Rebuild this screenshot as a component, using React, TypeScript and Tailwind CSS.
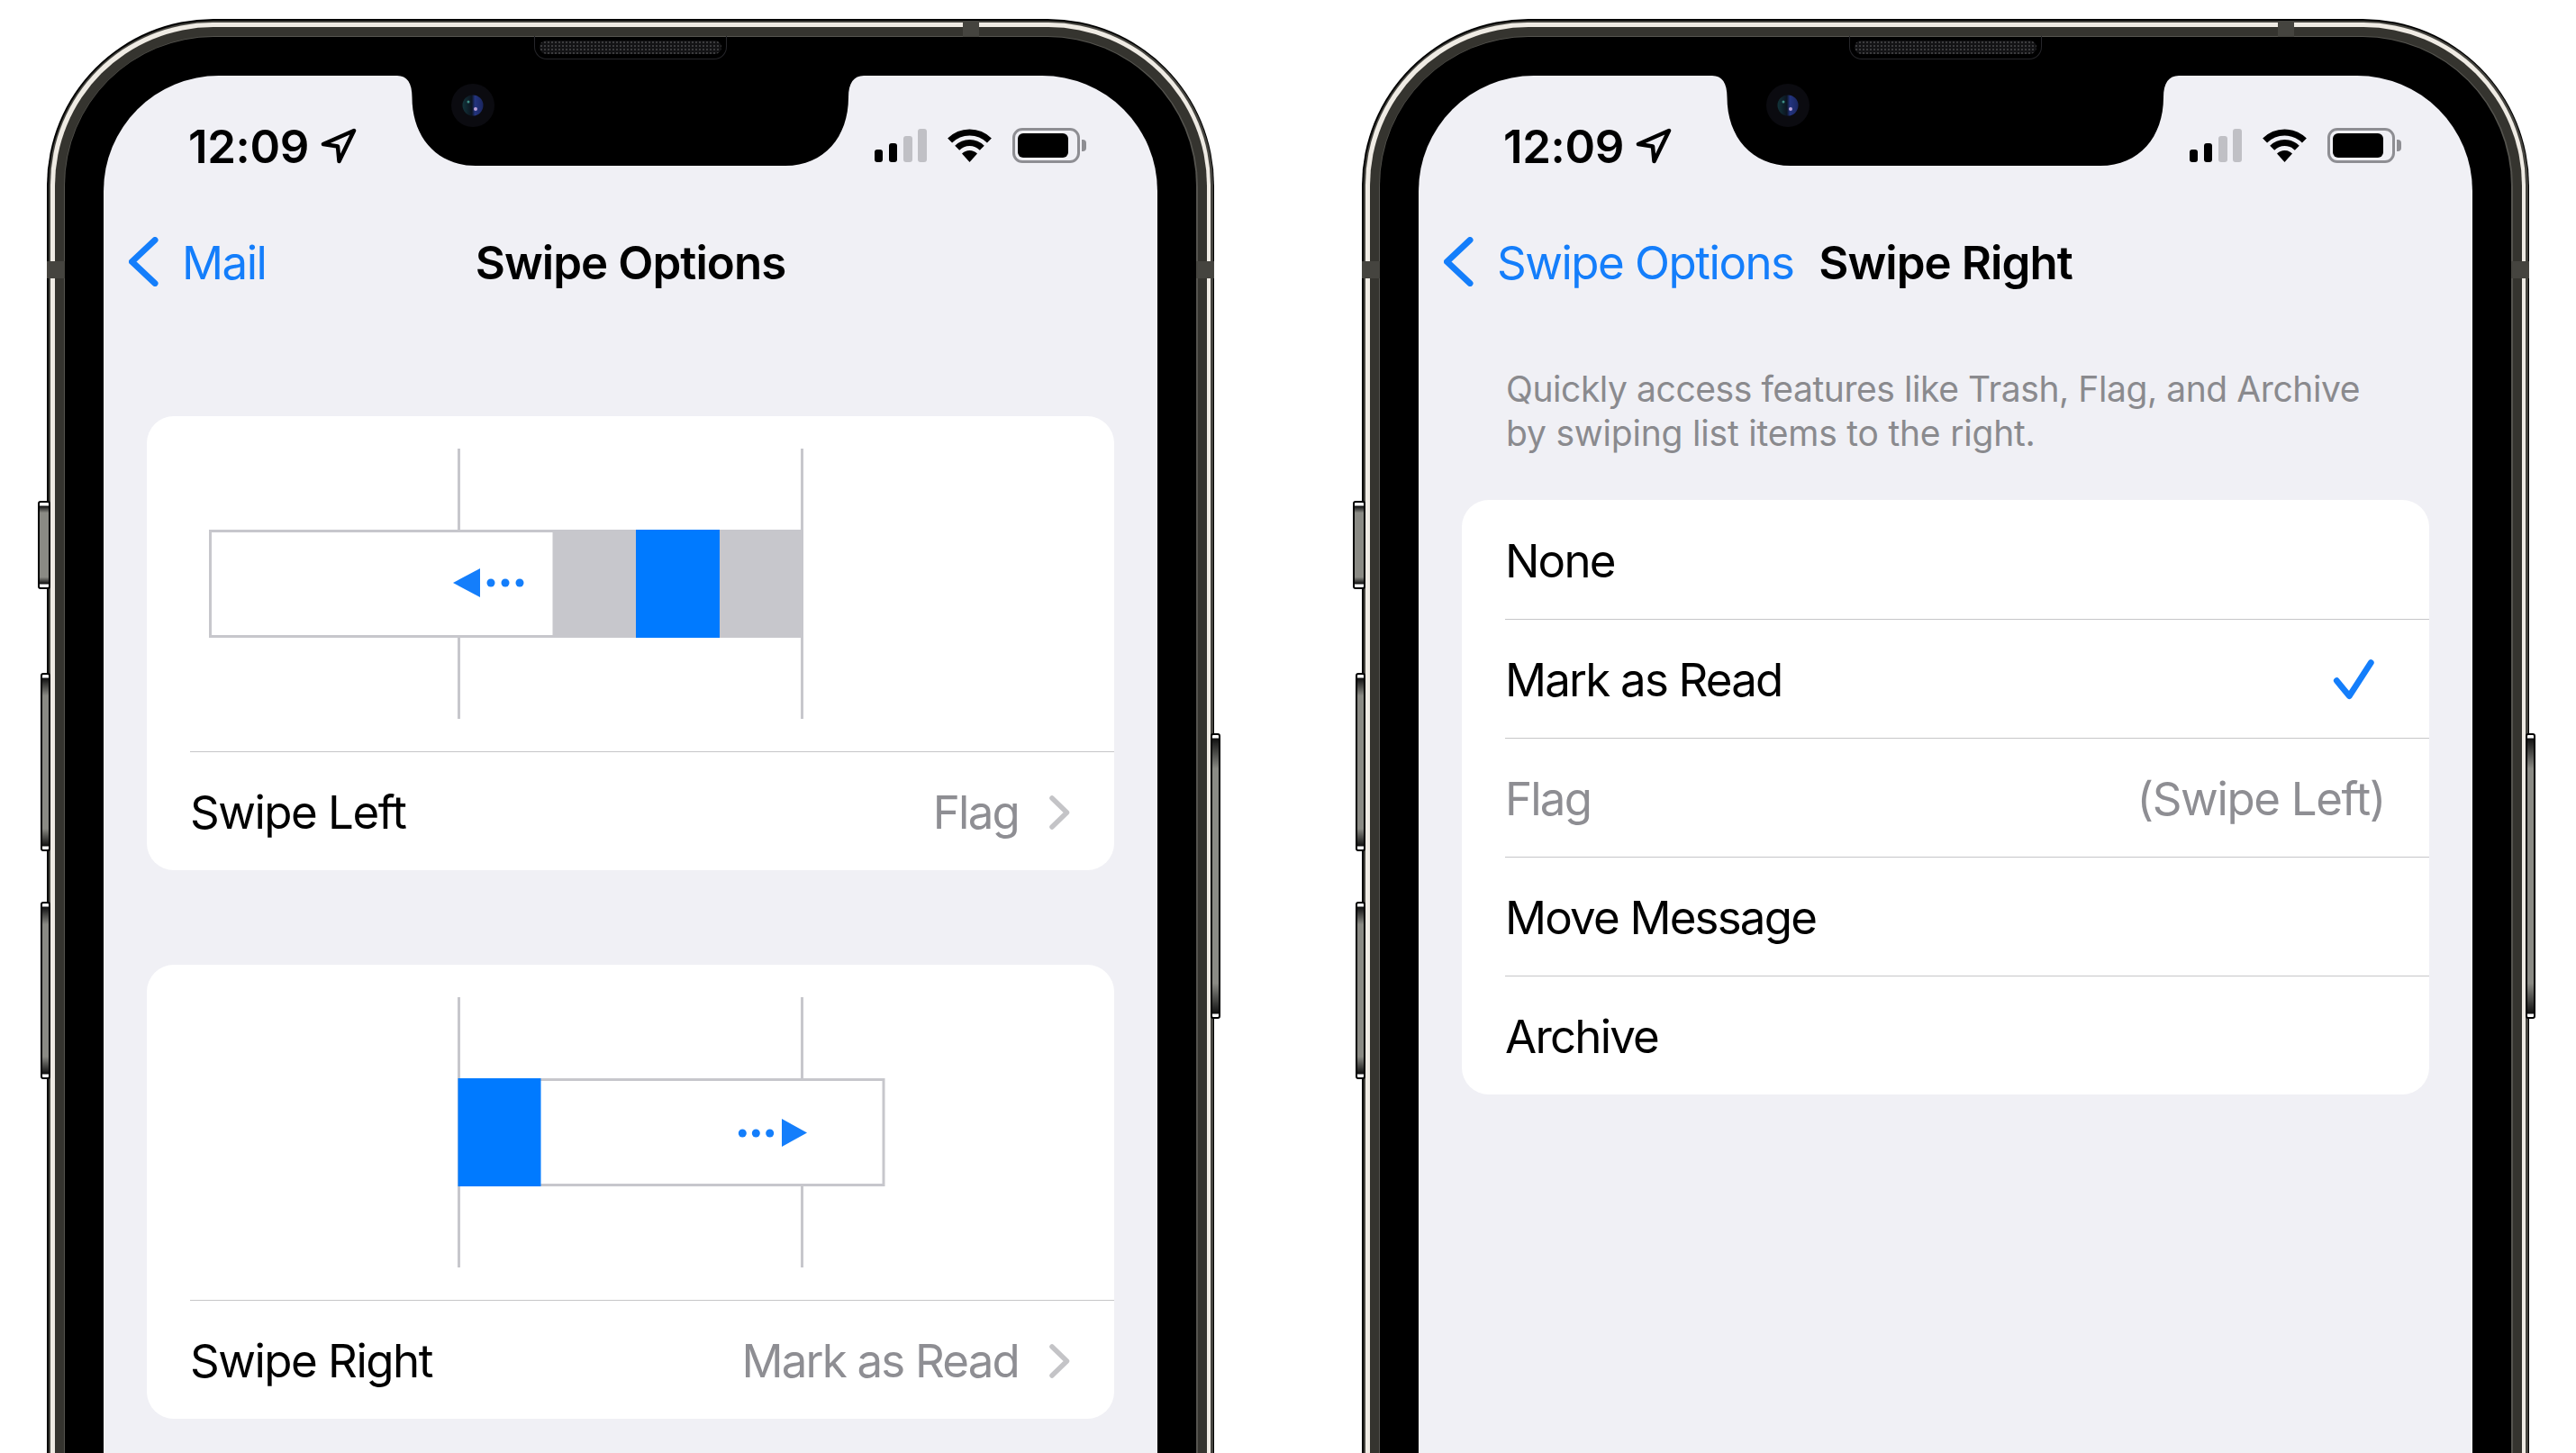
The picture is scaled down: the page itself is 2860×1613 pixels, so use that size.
import type { ReactNode } from "react";

const Back = () => (
  <svg width="33" height="55" viewBox="0 0 33 55" fill="none" className="shrink-0">
    <path d="M29 3.5 L3.5 27.5 L29 51.5" stroke="#147EFB" strokeWidth="7" strokeLinecap="round" strokeLinejoin="round" />
  </svg>
);

const Chevron = () => (
  <svg width="24" height="38" viewBox="0 0 24 38" fill="none" className="shrink-0">
    <path d="M3 3 L19.5 19 L3 35" stroke="#C4C4C7" strokeWidth="5.5" strokeLinecap="round" strokeLinejoin="round" />
  </svg>
);

const Notch = () => (
  <svg width="520" height="100" viewBox="0 0 520 100" className="absolute left-[325px] top-0">
    <defs>
      <linearGradient id="lens" x1="0" y1="0" x2="1" y2="0">
        <stop offset="0" stopColor="#12343a" />
        <stop offset="0.45" stopColor="#0c1420" />
        <stop offset="0.6" stopColor="#23347f" />
        <stop offset="1" stopColor="#1a2660" />
      </linearGradient>
    </defs>
    <path d="M0 0 H1 C12 0 17.5 8 17.5 24 C17.5 68 45 100 88 100 H432 C475 100 502 68 502 24 C502 8 508 0 519 0 H520 Z" fill="#000" />
    <circle cx="85" cy="33" r="24" fill="#0b0b10" />
    <circle cx="85" cy="33" r="11.5" fill="url(#lens)" />
    <circle cx="88" cy="37" r="2" fill="#b9a0d8" />
    <circle cx="80" cy="29" r="1.5" fill="#3f8f86" />
  </svg>
);

const StatusBar = () => (
  <div className="flex h-[37px] items-center justify-between pl-[94px] pr-[79px]">
    <div className="flex items-center gap-[13px]">
      <span className="pt-[2px] font-['Inter',sans-serif] text-[51px] font-semibold leading-[37px] tracking-[-0.4px] text-black">12:09</span>
      <svg width="40" height="40" viewBox="0 0 40 40" fill="none">
        <path d="M37 3 L3 18 L19 20.5 L20.5 37 Z" stroke="#000" strokeWidth="4.5" strokeLinejoin="round" />
      </svg>
    </div>
    <div className="flex items-center">
      <svg width="58" height="37" viewBox="0 0 58 37" className="mr-[22px]">
        <rect x="0" y="23" width="9" height="14" rx="3" fill="#000" />
        <rect x="16" y="16" width="9" height="21" rx="3" fill="#000" />
        <rect x="32" y="8" width="10" height="29" rx="3" fill="#C0C0C5" />
        <rect x="48" y="0" width="10" height="37" rx="3" fill="#C0C0C5" />
      </svg>
      <svg width="51" height="37" viewBox="0 0 51 37" fill="none" className="mr-[22px]">
        <path d="M3.6 13.1 A31 31 0 0 1 47.4 13.1" stroke="#000" strokeWidth="7" />
        <path d="M11.7 21.2 A19.5 19.5 0 0 1 39.3 21.2" stroke="#000" strokeWidth="7" />
        <path d="M25.5 37 L17 27.5 A12 12 0 0 1 34 27.5 Z" fill="#000" />
      </svg>
      <div className="flex h-[39px] w-[75px] items-center rounded-[11px] border-[3px] border-[#8e8e93] pl-[3px]">
        <div className="h-[27px] w-[56px] rounded-[6px] bg-black" />
      </div>
      <div className="ml-[2px] h-[13px] w-[5px] rounded-r-[4px] bg-[#8e8e93]" />
    </div>
  </div>
);

const Button = ({ className }: { className: string }) => (
  <div className={`absolute rounded-[3px] border-[2px] border-black bg-[linear-gradient(to_bottom,#fff_0,#fff_3px,#111_4px,#8a8a84_12%,#8a8a84_88%,#111_calc(100%-4px),#fff_calc(100%-3px),#fff_100%)] ${className}`} />
);

const Phone = ({ children }: { children: ReactNode }) => (
  <div className="relative h-[2000px] w-[1296px] shrink-0">
    {/* side buttons */}
    <Button className="-left-[10px] top-[535px] h-[98px] w-[14px]" />
    <Button className="-left-[7px] top-[726px] h-[198px] w-[11px]" />
    <Button className="-left-[7px] top-[980px] h-[197px] w-[11px]" />
    <Button className="-right-[7px] top-[793px] h-[317px] w-[11px]" />
    {/* frame rings */}
    <div className="h-full rounded-[185px] bg-black p-[1.5px]">
      <div className="h-full rounded-[183px] bg-[#45443f] p-[2.5px]">
        <div className="h-full rounded-[180px] bg-[#efebe4] p-[4.5px]">
          <div className="h-full rounded-[176px] bg-[#35342f] p-[10px]">
            <div className="h-full rounded-[167px] bg-[#55544f] p-[1.5px]">
              <div className="relative h-full rounded-[165px] bg-black p-[43px]">
                <div className="absolute left-[521px] -top-px h-[26px] w-[214px] rounded-b-[14px] border border-t-0 border-[#26262a] px-[5px] pt-[5px]">
                  <div className="h-[15px] rounded-[8px] bg-[#131315] bg-[radial-gradient(#3c3c3e_1.2px,transparent_1.4px)] bg-[length:4px_4px]" />
                </div>
                <div className="relative h-full overflow-hidden rounded-[128px] bg-[#f0f0f5] pt-[59px]">
                  <Notch />
                  {children}
                </div>
              </div>
            </div>
          </div>
        </div>
      </div>
    </div>
    {/* antenna bands */}
    <div className="absolute left-[1017px] top-[2px] h-[18px] w-[18px] bg-[#45443f]" />
    <div className="absolute left-0 top-[269px] h-[19px] w-[20px] bg-[#45443f]" />
    <div className="absolute right-0 top-[269px] h-[19px] w-[20px] bg-[#45443f]" />
  </div>
);

const NavBar = ({ back, title }: { back: string; title: string }) => (
  <div className="mt-[66px] grid h-[88px] grid-cols-[1fr_auto_1fr] items-center">
    <div className="flex items-center gap-[26px] pl-[28px]">
      <Back />
      <span className="whitespace-nowrap pt-[4px] font-['Inter',sans-serif] text-[51px] tracking-[-1.5px] text-[#147EFB]">{back}</span>
    </div>
    <span className="pt-[4px] font-['Inter',sans-serif] text-[51px] font-semibold tracking-[-0.95px] text-black">{title}</span>
    <div />
  </div>
);

const DiagramLeft = () => (
  <svg width="1074" height="372" viewBox="0 0 1074 372" className="block">
    <path d="M346.5 36 V336 M727.5 36 V336" stroke="#c7c7cc" strokeWidth="3" />
    <rect x="70.5" y="127.5" width="657" height="117" fill="#fff" stroke="#c7c7cc" strokeWidth="3" />
    <rect x="450.5" y="126" width="278.5" height="120" fill="#c7c7cc" />
    <rect x="543" y="126" width="93" height="120" fill="#007AFF" />
    <path d="M340 185 L370 169 V201 Z" fill="#147EFB" />
    <circle cx="382" cy="185" r="4.5" fill="#147EFB" />
    <circle cx="398" cy="185" r="4.5" fill="#147EFB" />
    <circle cx="414" cy="185" r="4.5" fill="#147EFB" />
  </svg>
);

const DiagramRight = () => (
  <svg width="1074" height="372" viewBox="0 0 1074 372" className="block">
    <path d="M346.5 36 V336 M727.5 36 V336" stroke="#c7c7cc" strokeWidth="3" />
    <rect x="346.5" y="127.5" width="471.5" height="117" fill="#fff" stroke="#c7c7cc" strokeWidth="3" />
    <rect x="345.5" y="126" width="92" height="120" fill="#007AFF" />
    <path d="M733 186.5 L705 171 V202 Z" fill="#147EFB" />
    <circle cx="661.3" cy="187" r="4.5" fill="#147EFB" />
    <circle cx="676.3" cy="187" r="4.5" fill="#147EFB" />
    <circle cx="691.7" cy="187" r="4.5" fill="#147EFB" />
  </svg>
);

const SwipeCard = ({ diagram, label, value }: { diagram: ReactNode; label: string; value: string }) => (
  <div className="overflow-hidden rounded-[30px] bg-white">
    {diagram}
    <div className="ml-[48px] flex h-[132px] items-center justify-between border-t border-[#c6c6c8] pr-[48px] pt-[3px] font-['Inter',sans-serif] text-[51px] tracking-[-1.5px]">
      <span className="text-black">{label}</span>
      <div className="flex items-center gap-[34px] text-[#8e8e93]">
        <span className="tracking-[-1.8px]">{value}</span>
        <Chevron />
      </div>
    </div>
  </div>
);

const Option = ({ label, first, muted, right }: { label: string; first?: boolean; muted?: boolean; right?: ReactNode }) => (
  <div className={`ml-[48px] flex h-[132px] items-center justify-between pr-[48px] pt-[4px] font-['Inter',sans-serif] text-[51px] tracking-[-1.8px] ${first ? "" : "border-t border-[#c6c6c8]"} ${muted ? "text-[#8e8e93]" : "text-black"}`}>
    <span>{label}</span>
    {right}
  </div>
);

export default function App() {
  return (
    <div className="flex h-[1613px] gap-[164px] overflow-hidden bg-white pl-[52px] pt-[21px]">
      <Phone>
        <StatusBar />
        <NavBar back="Mail" title="Swipe Options" />
        <div className="mt-[128px] flex flex-col gap-[105px] px-[48px]">
          <SwipeCard diagram={<DiagramLeft />} label="Swipe Left" value="Flag" />
          <SwipeCard diagram={<DiagramRight />} label="Swipe Right" value="Mark as Read" />
        </div>
      </Phone>
      <Phone>
        <StatusBar />
        <NavBar back="Swipe Options" title="Swipe Right" />
        <p className="pl-[97px] pt-[73px] font-['Inter',sans-serif] text-[39px] leading-[49px] tracking-[-0.43px] text-[#8a8a8e]">
          Quickly access features like Trash, Flag, and Archive
          <br />
          <span className="tracking-[-0.2px]">by swiping list items to the right.</span>
        </p>
        <div className="mx-[48px] mt-[50px] overflow-hidden rounded-[30px] bg-white">
          <Option label="None" first />
          <Option
            label="Mark as Read"
            right={
              <svg width="46" height="49" viewBox="0 0 46 49" fill="none" className="mr-[13px]">
                <path d="M4.3 24.7 L18.3 41.7 L42.3 4.7" stroke="#147EFB" strokeWidth="6.8" strokeLinecap="round" strokeLinejoin="round" />
              </svg>
            }
          />
          <Option label="Flag" muted right={<span className="mr-[1px] tracking-[-1.35px]">(Swipe Left)</span>} />
          <Option label="Move Message" />
          <Option label="Archive" />
        </div>
      </Phone>
    </div>
  );
}
